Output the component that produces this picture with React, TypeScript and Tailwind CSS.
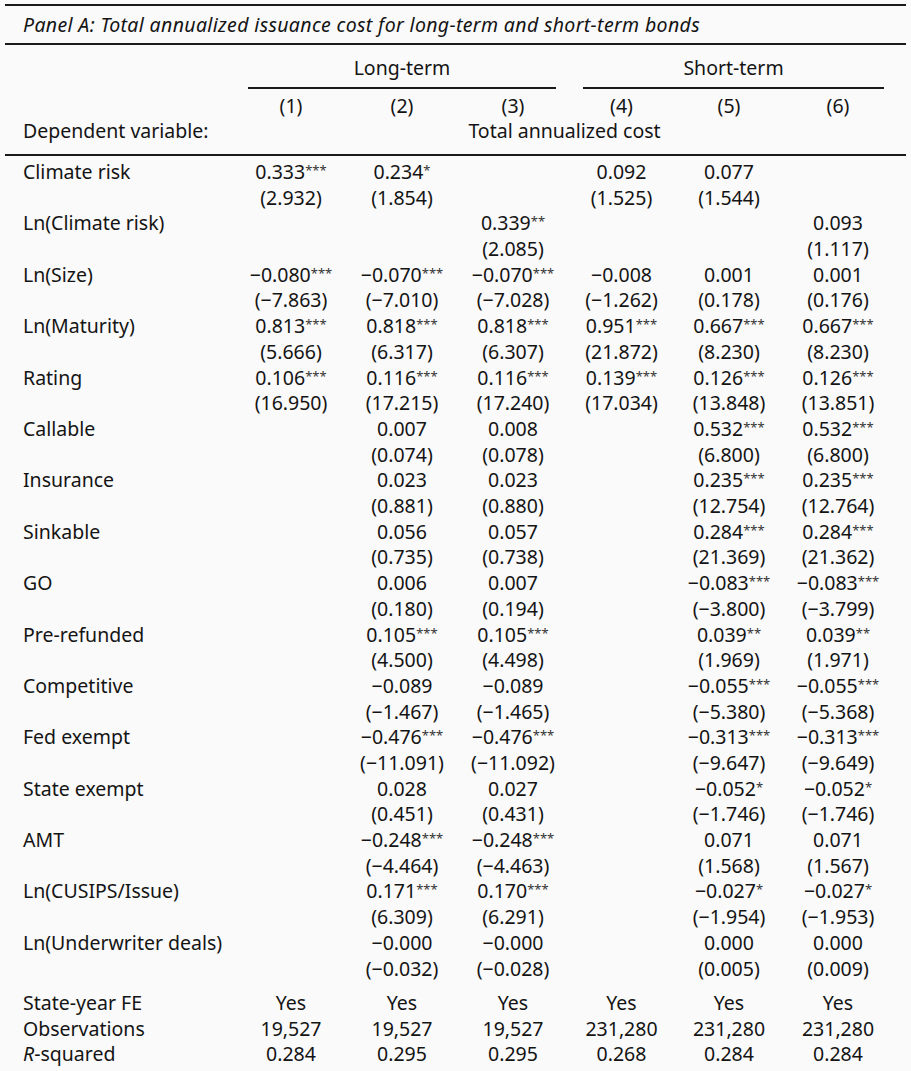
import React from 'react';

type Cell = [string, string] | null;

interface Row {
  label: string;
  cells: Cell[];
}

const rows: Row[] = [
  {
    label: 'Climate risk',
    cells: [['0.333***', '(2.932)'], ['0.234*', '(1.854)'], null, ['0.092', '(1.525)'], ['0.077', '(1.544)'], null],
  },
  {
    label: 'Ln(Climate risk)',
    cells: [null, null, ['0.339**', '(2.085)'], null, null, ['0.093', '(1.117)']],
  },
  {
    label: 'Ln(Size)',
    cells: [
      ['−0.080***', '(−7.863)'],
      ['−0.070***', '(−7.010)'],
      ['−0.070***', '(−7.028)'],
      ['−0.008', '(−1.262)'],
      ['0.001', '(0.178)'],
      ['0.001', '(0.176)'],
    ],
  },
  {
    label: 'Ln(Maturity)',
    cells: [
      ['0.813***', '(5.666)'],
      ['0.818***', '(6.317)'],
      ['0.818***', '(6.307)'],
      ['0.951***', '(21.872)'],
      ['0.667***', '(8.230)'],
      ['0.667***', '(8.230)'],
    ],
  },
  {
    label: 'Rating',
    cells: [
      ['0.106***', '(16.950)'],
      ['0.116***', '(17.215)'],
      ['0.116***', '(17.240)'],
      ['0.139***', '(17.034)'],
      ['0.126***', '(13.848)'],
      ['0.126***', '(13.851)'],
    ],
  },
  {
    label: 'Callable',
    cells: [null, ['0.007', '(0.074)'], ['0.008', '(0.078)'], null, ['0.532***', '(6.800)'], ['0.532***', '(6.800)']],
  },
  {
    label: 'Insurance',
    cells: [null, ['0.023', '(0.881)'], ['0.023', '(0.880)'], null, ['0.235***', '(12.754)'], ['0.235***', '(12.764)']],
  },
  {
    label: 'Sinkable',
    cells: [null, ['0.056', '(0.735)'], ['0.057', '(0.738)'], null, ['0.284***', '(21.369)'], ['0.284***', '(21.362)']],
  },
  {
    label: 'GO',
    cells: [null, ['0.006', '(0.180)'], ['0.007', '(0.194)'], null, ['−0.083***', '(−3.800)'], ['−0.083***', '(−3.799)']],
  },
  {
    label: 'Pre-refunded',
    cells: [null, ['0.105***', '(4.500)'], ['0.105***', '(4.498)'], null, ['0.039**', '(1.969)'], ['0.039**', '(1.971)']],
  },
  {
    label: 'Competitive',
    cells: [null, ['−0.089', '(−1.467)'], ['−0.089', '(−1.465)'], null, ['−0.055***', '(−5.380)'], ['−0.055***', '(−5.368)']],
  },
  {
    label: 'Fed exempt',
    cells: [null, ['−0.476***', '(−11.091)'], ['−0.476***', '(−11.092)'], null, ['−0.313***', '(−9.647)'], ['−0.313***', '(−9.649)']],
  },
  {
    label: 'State exempt',
    cells: [null, ['0.028', '(0.451)'], ['0.027', '(0.431)'], null, ['−0.052*', '(−1.746)'], ['−0.052*', '(−1.746)']],
  },
  {
    label: 'AMT',
    cells: [null, ['−0.248***', '(−4.464)'], ['−0.248***', '(−4.463)'], null, ['0.071', '(1.568)'], ['0.071', '(1.567)']],
  },
  {
    label: 'Ln(CUSIPS/Issue)',
    cells: [null, ['0.171***', '(6.309)'], ['0.170***', '(6.291)'], null, ['−0.027*', '(−1.954)'], ['−0.027*', '(−1.953)']],
  },
  {
    label: 'Ln(Underwriter deals)',
    cells: [null, ['−0.000', '(−0.032)'], ['−0.000', '(−0.028)'], null, ['0.000', '(0.005)'], ['0.000', '(0.009)']],
  },
];

const grid = 'grid grid-cols-[231px_110px_112px_110px_107px_108px_110px]';

// coefficient with its significance stars set small and raised
const Coef: React.FC<{ value: string }> = ({ value }) => {
  const m = value.match(/^([^*]*)(\**)$/);
  const num = m ? m[1] : value;
  const stars = m ? m[2] : '';
  return (
    <div className="h-[25.7px] whitespace-nowrap">
      {num}
      {stars && <span className="text-[13px] leading-none relative -top-[4px] text-[#333]">{stars}</span>}
    </div>
  );
};

export default function App() {
  return (
    <div
      className="w-[911px] h-[1071px] bg-[#fafafa] text-[#141414] px-[5px] pt-[4px] text-[19.5px]"
      style={{ fontFamily: '"Noto Sans", "DejaVu Sans", sans-serif' }}
    >
      <div className="border-t-2 border-[#1a1a1a] h-[39px] flex items-center pl-[18px] italic tracking-[0.35px]">
        Panel A: Total annualized issuance cost for long-term and short-term bonds
      </div>

      {/* column headers */}
      <div className="border-t-2 border-[#1a1a1a] pt-[10px] pb-[11px]">
        <div className={grid}>
          <div />
          <div className="col-span-3 text-center leading-[26px] mx-3 pb-[6px] border-b-2 border-[#1a1a1a]">Long-term</div>
          <div className="col-span-3 text-center leading-[26px] ml-[15px] mr-[9px] pb-[6px] border-b-2 border-[#1a1a1a]">
            Short-term
          </div>
        </div>
        <div className={`${grid} leading-[25px] pt-[4px]`}>
          <div />
          {['(1)', '(2)', '(3)', '(4)', '(5)', '(6)'].map((h) => (
            <div key={h} className="text-center">
              {h}
            </div>
          ))}
          <div className="pl-[18px]">Dependent variable:</div>
          <div className="col-span-6 text-center">Total annualized cost</div>
        </div>
      </div>

      {/* coefficient rows */}
      <div className="border-t-2 border-[#1a1a1a] pt-[3px] leading-[25.7px]">
        {rows.map((r) => (
          <div key={r.label} className={grid}>
            <div className="pl-[18px] h-[51.4px]">{r.label}</div>
            {r.cells.map((c, i) => (
              <div key={i} className="flex flex-col items-center h-[51.4px]">
                {c ? (
                  <>
                    <Coef value={c[0]} />
                    <div className="h-[25.7px] whitespace-nowrap">{c[1]}</div>
                  </>
                ) : null}
              </div>
            ))}
          </div>
        ))}

        <div className="pt-[9px] leading-[25.5px]">
          <div className={grid}>
            <div className="pl-[18px]">State-year FE</div>
            {[0, 1, 2, 3, 4, 5].map((i) => (
              <div key={i} className="text-center">
                Yes
              </div>
            ))}
          </div>
          <div className={grid}>
            <div className="pl-[18px]">Observations</div>
            {['19,527', '19,527', '19,527', '231,280', '231,280', '231,280'].map((v, i) => (
              <div key={i} className="text-center">
                {v}
              </div>
            ))}
          </div>
          <div className={grid}>
            <div className="pl-[18px]">
              <span className="italic">R</span>-squared
            </div>
            {['0.284', '0.295', '0.295', '0.268', '0.284', '0.284'].map((v, i) => (
              <div key={i} className="text-center">
                {v}
              </div>
            ))}
          </div>
        </div>
      </div>
    </div>
  );
}
